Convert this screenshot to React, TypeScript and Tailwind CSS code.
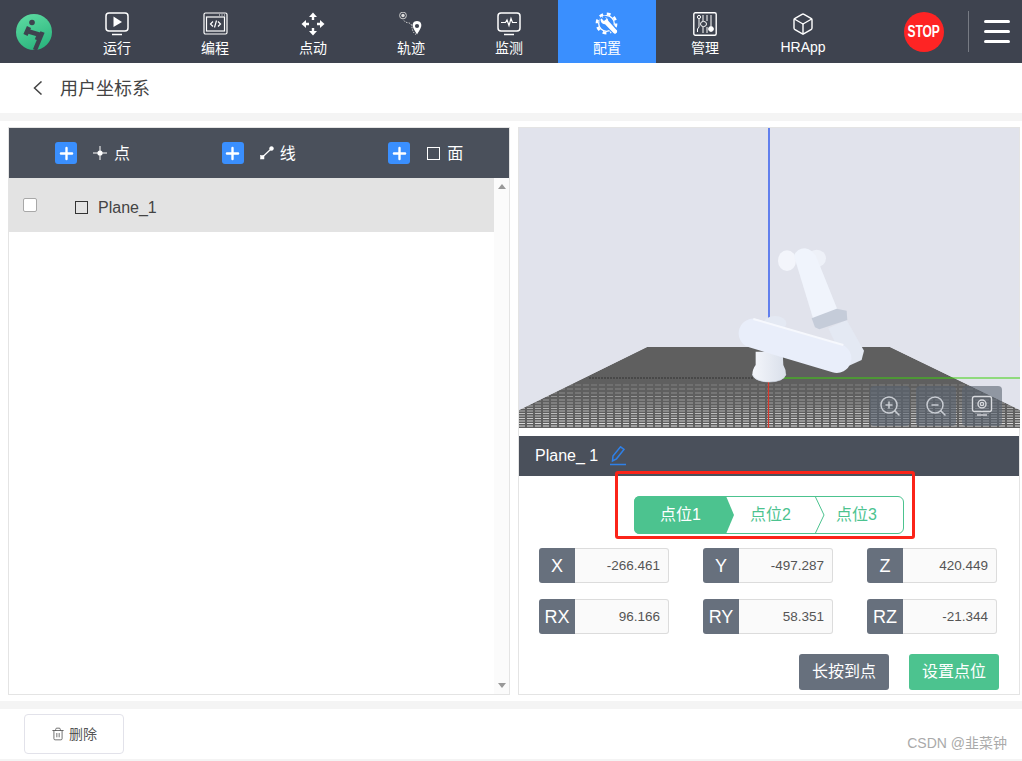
import React from 'react';
import { ZoomIn, ZoomOut, Box, Trash2, Plus } from 'lucide-react';

const font = { fontFamily: '"Liberation Sans", "Noto Sans CJK SC", sans-serif' };

// Nav icons
const PlayIcon = () => (
  <svg width="26" height="24" viewBox="0 0 26 24" fill="none" stroke="#fff" strokeWidth="1.5">
    <rect x="2" y="1" width="22" height="18" rx="3" />
    <path d="M9.5 4.5 L18 10 L9.5 15 Z" fill="#fff" stroke="none" />
    <path d="M8 22.5 H18" />
  </svg>
);

const CodeIcon = () => (
  <svg width="26" height="24" viewBox="0 0 26 24" fill="none" stroke="#fff" strokeWidth="1.2">
    <rect x="2" y="1" width="23" height="21" rx="1.5" />
    <rect x="4.5" y="5" width="18" height="14" />
    <path d="M11 9.5 L8.5 12 L11 14.5 M16 9.5 L18.5 12 L16 14.5 M14.5 8.5 L12.5 15.5" />
    <path d="M17 3 H18 M19.5 3 H20.5 M22 3 H23" />
  </svg>
);

const MoveIcon = () => (
  <svg width="24" height="24" viewBox="0 0 24 24" fill="#fff">
    <path d="M12 0.5 L16 5 H8 Z M12 23.5 L16 19 H8 Z M0.5 12 L5 8 V16 Z M23.5 12 L19 8 V16 Z" />
    <path d="M10.8 4 H13.2 V8 H10.8 Z M10.8 16 H13.2 V20 H10.8 Z M4 10.8 H8 V13.2 H4 Z M16 10.8 H20 V13.2 H16 Z" />
  </svg>
);

const TrackIcon = () => (
  <svg width="26" height="24" viewBox="0 0 26 24" fill="none">
    <circle cx="5" cy="3.5" r="3.4" stroke="#ccc" strokeWidth="1" />
    <circle cx="5" cy="3.5" r="1.7" fill="#ddd" />
    <path d="M6 8.5 C8 12 12 9.5 13.5 13 C14.5 17 14 20 18 22.5" stroke="#ccc" strokeWidth="1" strokeDasharray="1.5 1.2" />
    <path d="M19 9 C15.4 9 14.2 12 14.8 14.5 C15.4 17 18 20.5 19 22.5 C20 20.5 22.6 17 23.2 14.5 C23.8 12 22.6 9 19 9 Z" fill="#fff" />
    <circle cx="19" cy="14" r="2.1" fill="#3e434f" />
  </svg>
);

const MonitorIcon = () => (
  <svg width="26" height="24" viewBox="0 0 26 24" fill="none" stroke="#fff" strokeWidth="1.5">
    <rect x="2" y="1" width="22" height="18" rx="3" />
    <path d="M5 10.5 H9.5 L11 8 L13 13.5 L15 6.5 L16.5 10.5 H21" strokeWidth="1.2" />
    <path d="M8 22.5 H18" />
  </svg>
);

const GearIcon = () => (
  <svg width="24" height="24" viewBox="0 0 24 24" fill="none" stroke="#fff">
    <circle cx="11.5" cy="11.5" r="9.6" strokeWidth="2.6" strokeDasharray="3.8 3.74" />
    <circle cx="11.5" cy="11.5" r="7.8" strokeWidth="1.3" />
    <path
      d="M6.5 5.5 L9 8.2 L10.8 6.8 L8.6 4.6 C11 4 13.4 5.6 13.8 8.4 L22 17.5 C23.2 19 22.8 20.6 21.6 21.6 C20.4 22.6 18.8 22.4 17.8 21.2 L9.8 12.8 C6.8 13 4.6 10 5 7 Z"
      fill="#fff"
      stroke="#3a8ffe"
      strokeWidth="1.2"
    />
  </svg>
);

const ManageIcon = () => (
  <svg width="24" height="24" viewBox="0 0 24 24" fill="none" stroke="#fff" strokeWidth="1">
    <rect x="0.8" y="0.8" width="22.4" height="22.4" rx="1.5" strokeWidth="1.4" />
    <circle cx="6" cy="5" r="1.6" />
    <path d="M6 7 V15 L4.5 17 V20" />
    <path d="M10 3 V9 M10 15 V21 M14 3 V9 M14 15 V21" />
    <ellipse cx="10.5" cy="12" rx="3" ry="2.6" />
    <path d="M18 3 V14" />
    <circle cx="18" cy="17" r="2.4" fill="#fff" />
  </svg>
);

const navItems = [
  { label: '运行', icon: <PlayIcon /> },
  { label: '编程', icon: <CodeIcon /> },
  { label: '点动', icon: <MoveIcon /> },
  { label: '轨迹', icon: <TrackIcon /> },
  { label: '监测', icon: <MonitorIcon /> },
  { label: '配置', icon: <GearIcon />, active: true },
  { label: '管理', icon: <ManageIcon /> },
];

const Logo = () => (
  <svg width="38" height="38" viewBox="0 0 38 38">
    <defs>
      <linearGradient id="logoFill" x1="0.3" y1="0" x2="0.7" y2="1">
        <stop offset="0" stopColor="#5bd9a0" />
        <stop offset="1" stopColor="#29b47c" />
      </linearGradient>
    </defs>
    <circle cx="19" cy="19" r="18" fill="url(#logoFill)" />
    <circle cx="17" cy="9.5" r="2.8" fill="#3e434f" />
    <g stroke="#3e434f" fill="none" strokeWidth="4.5">
      <path d="M14 14 L10.5 22" />
      <path d="M12 18 L24 21.5 L22 27" />
      <path d="M27.5 19 L20 37" />
    </g>
  </svg>
);

const PointIcon = () => (
  <svg width="14" height="14" viewBox="0 0 14 14" fill="#fff">
    <path d="M6.5 0 H7.5 V14 H6.5 Z M0 6.5 H14 V7.5 H0 Z" />
    <circle cx="7" cy="7" r="2.6" />
  </svg>
);

const LineIcon = () => (
  <svg width="14" height="14" viewBox="0 0 14 14" fill="#fff" stroke="#fff">
    <rect x="0.5" y="9.5" width="3.5" height="3.5" strokeWidth="0.5" />
    <circle cx="11.5" cy="2.5" r="2" strokeWidth="0.5" />
    <path d="M3 10.5 L10.5 3.5" strokeWidth="1.2" />
  </svg>
);

const FaceIcon = () => <span className="block w-[13px] h-[13px] border-[1.5px] border-white" />;

const AddTool = ({ icon, label, textGap = 'ml-[7px]' }: { icon: React.ReactNode; label: string; textGap?: string }) => (
  <div className="flex items-center pl-[46px]">
    <span className="w-[22px] h-[22px] rounded-[3px] bg-[#3a8ffe] flex items-center justify-center">
      <Plus size={19} color="#fff" strokeWidth={3} />
    </span>
    <span className="ml-4 w-[14px] flex justify-center">{icon}</span>
    <span className={`${textGap} mt-0.5 text-base text-white`}>{label}</span>
  </div>
);

const coords = [
  { name: 'X', value: '-266.461' },
  { name: 'Y', value: '-497.287' },
  { name: 'Z', value: '420.449' },
  { name: 'RX', value: '96.166' },
  { name: 'RY', value: '58.351' },
  { name: 'RZ', value: '-21.344' },
];

const CoordField = ({ name, value }: { name: string; value: string }) => (
  <div className="flex h-[35px] w-[130px]">
    <span className="w-9 rounded-l-[3px] bg-[#67707d] text-white text-lg flex items-center justify-center">{name}</span>
    <span className="flex-1 rounded-r-[3px] border border-l-0 border-[#dcdcdc] bg-[#fafafa] text-[13.5px] text-[#555] flex items-center justify-end pr-2 pt-px">
      {value}
    </span>
  </div>
);

// floor rows get tighter and brighter towards the viewer
const gridRows = [257, 261, 265, 268.5, 272, 275, 278, 280.5, 283, 285.5, 288, 290.5, 293, 295.5, 298];

// 3D view: floor, axes and arm
const RobotScene = () => (
  <svg className="block" width="501" height="300" viewBox="0 0 501 300">
    <defs>
      <linearGradient id="baseFill" x1="0" y1="0" x2="1" y2="0">
        <stop offset="0" stopColor="#f4f6fb" />
        <stop offset="1" stopColor="#d9dfea" />
      </linearGradient>
    </defs>
    <path d="M128 219 H371 L501 282 V300 H0 V282 Z" fill="#5f5f5f" />
    {gridRows.map((y, i) => (
      <line
        key={y}
        x1="0"
        x2="501"
        y1={y}
        y2={y}
        stroke="#e6e6e6"
        strokeWidth="1"
        strokeDasharray="6 2"
        opacity={0.25 + i * 0.05}
      />
    ))}
    <path d="M128 219 L0 282 V219 Z M371 219 L501 282 V219 Z" fill="#e1e3ec" />
    <line x1="250" y1="0" x2="250" y2="190" stroke="#2b55ee" strokeWidth="1.4" />
    <line x1="70" y1="250" x2="240" y2="250" stroke="#333" strokeWidth="1" strokeDasharray="2 1" />
    <line x1="250" y1="250" x2="501" y2="250" stroke="#3fd10f" strokeWidth="1" />
    <line x1="249.5" y1="254" x2="249.5" y2="300" stroke="#d8362a" strokeWidth="1.2" />
    <g transform="translate(171 92) scale(0.3333)">
      <path d="M197 395 H278 L280 435 Q288 448 288 465 Q280 486 238 486 Q195 486 187 465 Q187 448 197 435 Z" fill="url(#baseFill)" />
      <path d="M187 462 Q195 486 238 486 Q280 486 288 462" fill="none" stroke="#cfd6e2" strokeWidth="2" />
      <ellipse cx="380" cy="115" rx="28" ry="26" fill="#eef1f8" />
      <ellipse cx="291" cy="122" rx="27" ry="31" fill="#f3f5fb" />
      <path d="M415 325 L470 300 L522 392 L515 420 L470 440 Z" fill="#e4e9f3" />
      <path d="M312 108 Q320 85 345 85 Q368 90 378 108 L442 268 L370 298 Z" fill="#f0f4fc" />
      <path d="M365 295 L440 266 L470 272 L472 300 L388 328 L375 322 Z" fill="#c5ccd9" />
      <ellipse cx="255" cy="310" rx="34" ry="22" fill="#e4e9f3" />
      <line x1="190" y1="340" x2="440" y2="415" stroke="#e9eefa" strokeWidth="88" strokeLinecap="round" />
      <path d="M190 297 L460 375" stroke="#f6f8fd" strokeWidth="6" />
    </g>
  </svg>
);

const ViewButton = ({ children }: { children: React.ReactNode }) => (
  <span className="w-10 h-10 rounded bg-[#5a6472]/60 flex items-center justify-center">{children}</span>
);

const App: React.FC = () => {
  return (
    <div className="w-[1022px] h-[761px] bg-[#f4f4f4] overflow-hidden flex flex-col" style={font}>
      {/* Top nav */}
      <header className="h-[63px] bg-[#3e434f] flex items-stretch shrink-0">
        <div className="w-[68px] pl-[15px] flex items-center">
          <Logo />
        </div>
        {navItems.map((item) => (
          <div
            key={item.label}
            className={`w-[98px] flex flex-col items-center pt-3 text-sm leading-[18px] text-white ${item.active ? 'bg-[#3a8ffe]' : ''}`}
          >
            <span className="h-6 flex items-center">{item.icon}</span>
            <span className="mt-[3px]">{item.label}</span>
          </div>
        ))}
        <div className="w-[98px] flex flex-col items-center pt-3 text-sm leading-[18px] text-white">
          <Box size={24} strokeWidth={1.4} />
          <span className="mt-0.5">HRApp</span>
        </div>
        <div className="ml-[52px] flex items-center">
          <span className="w-10 h-10 rounded-full bg-[#fe2424] text-white text-base font-bold flex items-center justify-center">
            <span className="scale-x-75">STOP</span>
          </span>
        </div>
        <div className="ml-6 my-[11px] w-px bg-[#777b84]" />
        <div className="ml-[15px] flex flex-col justify-center gap-[7px]">
          <span className="block w-[26px] h-[3px] rounded-full bg-white" />
          <span className="block w-[26px] h-[3px] rounded-full bg-white" />
          <span className="block w-[26px] h-[3px] rounded-full bg-white" />
        </div>
      </header>

      {/* Page title */}
      <div className="h-[50px] bg-white flex items-center pl-[33px] shrink-0">
        <svg width="10" height="14" viewBox="0 0 10 14" fill="none" stroke="#444" strokeWidth="1.5">
          <path d="M8.5 0.5 L1.5 7 L8.5 13.5" />
        </svg>
        <span className="ml-[17px] mt-0.5 text-lg text-[#444]">用户坐标系</span>
      </div>

      {/* Panels */}
      <main className="mt-2 h-[580px] bg-white pt-1.5 pb-1.5 pl-2 pr-0.5 flex gap-2 shrink-0">
        {/* Left list */}
        <section className="w-[502px] border border-[#e4e4e4] flex flex-col">
          <div className="h-[50px] bg-[#4a505b] grid grid-cols-3">
            <AddTool icon={<PointIcon />} label="点" />
            <AddTool icon={<LineIcon />} label="线" textGap="ml-[6px]" />
            <AddTool icon={<FaceIcon />} label="面" />
          </div>
          <div className="flex-1 flex">
            <div className="flex-1">
              <div className="h-[54px] bg-[#e3e3e3] flex items-center text-base text-[#444]">
                <span className="ml-3.5 w-3.5 h-3.5 rounded-[2px] bg-white border border-[#a8a8a8]" />
                <span className="ml-[38px] mt-[5px] w-[13px] h-[13px] border-[1.5px] border-[#333]" />
                <span className="ml-2.5 mt-1.5">Plane_1</span>
              </div>
            </div>
            <div className="w-[15px] bg-[#fbfbfb] flex flex-col items-center justify-between py-1.5">
              <span className="w-0 h-0 border-x-[4px] border-x-transparent border-b-[5px] border-b-[#999]" />
              <span className="w-0 h-0 border-x-[4px] border-x-transparent border-t-[5px] border-t-[#999]" />
            </div>
          </div>
        </section>

        {/* Right detail */}
        <section className="w-[502px] border border-[#e4e4e4] flex flex-col relative">
          <div className="h-[300px] bg-[#e1e3ec] relative">
            <RobotScene />
            <div className="absolute right-[17px] bottom-0.5 flex gap-1.5">
              <ViewButton>
                <ZoomIn size={24} color="#c8ccd2" strokeWidth={1.5} />
              </ViewButton>
              <ViewButton>
                <ZoomOut size={24} color="#c8ccd2" strokeWidth={1.5} />
              </ViewButton>
              <ViewButton>
                <svg width="22" height="22" viewBox="0 0 22 22" fill="none" stroke="#d8dade" strokeWidth="1.4">
                  <rect x="1.5" y="1.5" width="19" height="15" rx="2" />
                  <circle cx="11" cy="9" r="4" />
                  <circle cx="11" cy="9" r="1.6" />
                  <path d="M6 20 H16" />
                </svg>
              </ViewButton>
            </div>
          </div>
          <div className="h-2 bg-white" />
          <div className="h-10 bg-[#4a505b] flex items-center pl-4 text-base text-white">
            <span>Plane_ 1</span>
            <svg className="ml-3" width="16" height="20" viewBox="0 0 16 20" fill="none" stroke="#2f80e8" strokeWidth="1.5">
              <path d="M2.5 15 L3 10 L10.5 0.8 L14 3.5 L6.5 12.8 Z" />
              <path d="M0 18.5 H16" />
            </svg>
          </div>

          {/* Point tabs */}
          <div className="mt-5 ml-[115px] w-[270px] h-[38px] relative rounded-md border border-[#4cc38f] text-base text-[#4cc38f]">
            <svg className="absolute -left-px -top-px" width="270" height="38" viewBox="0 0 270 38" fill="none">
              <path d="M6 0 H92 L100 19 L92 38 H6 Q0 38 0 32 V6 Q0 0 6 0 Z" fill="#4cc38f" />
              <path d="M181 0 L190 19 L181 38" stroke="#4cc38f" strokeWidth="1" />
            </svg>
            <span className="absolute left-[25px] top-2 leading-5 text-white">点位1</span>
            <span className="absolute left-[115px] top-2 leading-5">点位2</span>
            <span className="absolute left-[201px] top-2 leading-5">点位3</span>
          </div>

          <div className="mt-3.5 ml-5 grid grid-cols-[130px_130px_130px] gap-x-[34px] gap-y-4">
            {coords.map((c) => (
              <CoordField key={c.name} name={c.name} value={c.value} />
            ))}
          </div>

          <div className="mt-5 mr-5 flex justify-end gap-5 text-base text-white">
            <button className="w-[90px] h-9 rounded-[3px] bg-[#67707d]">长按到点</button>
            <button className="w-[90px] h-9 rounded-[3px] bg-[#4cc38f]">设置点位</button>
          </div>

          {/* Highlight frame */}
          <div className="absolute left-[96px] top-[343px] w-[300px] h-[68px] rounded-[3px] border-[3px] border-[#fb2419]" />
        </section>
      </main>

      {/* Footer */}
      <footer className="mt-2 h-[50px] bg-white flex items-center justify-between pl-6 pr-[15px] shrink-0">
        <button className="w-[100px] h-10 rounded border border-[#e2e2ea] bg-white flex items-center justify-center gap-1 text-sm text-[#555]">
          <Trash2 size={14} strokeWidth={1.4} />
          删除
        </button>
        <span className="self-end mb-1.5 text-sm text-[#aaa]">CSDN @韭菜钟</span>
      </footer>
    </div>
  );
};

export default App;
